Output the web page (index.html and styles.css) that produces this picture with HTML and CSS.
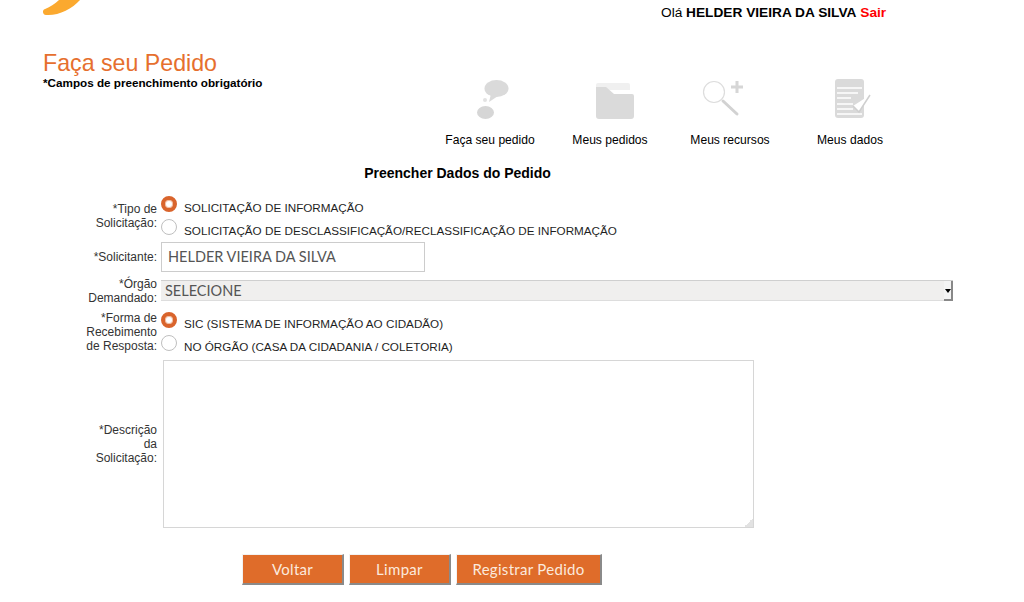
FILE: index.html
```html
<!DOCTYPE html>
<html lang="pt-BR">
<head>
    <meta charset="UTF-8">
    <title>Faça seu Pedido</title>
    <link rel="stylesheet" href="styles.css">
</head>
<body>
    <header class="top-bar">
        <svg class="logo" viewBox="0 0 60 16">
            <path fill="#FBA92F" d="M16 0C12 4 7 7 1 9.500C-1 11 0 15 3 15C15 16 29 9 37 0Z"/>
        </svg>
        <p class="user-info">Olá <b>HELDER VIEIRA DA SILVA</b> <a class="logout" href="#">Sair</a></p>
    </header>

    <div class="page-head">
        <div class="page-title">
            <h1>Faça seu Pedido</h1>
            <p>*Campos de preenchimento obrigatório</p>
        </div>
        <nav class="main-nav">
            <a class="nav-item" href="#">
                <svg class="nav-icon" viewBox="0 0 50 46">
                    <ellipse cx="31.500" cy="10.500" rx="12" ry="8.500" fill="#DADADA"/>
                    <path fill="#DADADA" d="M26 16l-2 8 9-6z"/>
                    <circle cx="20" cy="22" r="2" fill="#E2E2E2"/>
                    <ellipse cx="20.500" cy="34.500" rx="8.500" ry="6.500" fill="#D6D6D6"/>
                </svg>
                Faça seu pedido
            </a>
            <a class="nav-item" href="#">
                <svg class="nav-icon" viewBox="0 0 50 46">
                    <path fill="#F0F0F0" d="M13 5h30a2 2 0 0 1 2 2v5H11V7a2 2 0 0 1 2-2z"/>
                    <path fill="#DADADA" d="M11 9h10l8 7h18a2 2 0 0 1 2 2v20a3 3 0 0 1-3 3H14a3 3 0 0 1-3-3z"/>
                </svg>
                Meus pedidos
            </a>
            <a class="nav-item" href="#">
                <svg class="nav-icon" viewBox="0 0 50 46">
                    <circle cx="9" cy="14" r="10.500" fill="none" stroke="#DDD" stroke-width="1.200"/>
                    <path stroke="#D2D2D2" stroke-width="3" stroke-linecap="round" d="M18 23l14 13"/>
                    <path stroke="#D6D6D6" stroke-width="3" d="M32 3v12M26 9h12" fill="none"/>
                </svg>
                Meus recursos
            </a>
            <a class="nav-item" href="#">
                <svg class="nav-icon" viewBox="0 0 50 46">
                    <rect x="10" y="1" width="29" height="39" rx="3" fill="#DADADA"/>
                    <path stroke="#FFF" stroke-width="1.500" d="M12 10h25M12 15h21M12 20h14M12 26h16M12 31h16M12 36h25" fill="none"/>
                    <path stroke="#CFCFCF" stroke-width="1.500" fill="#FFF" d="M28 28l6 6 11-17"/>
                </svg>
                Meus dados
            </a>
        </nav>
    </div>

    <h2 class="form-title">Preencher Dados do Pedido</h2>

    <form class="order-form">
        <div class="form-row row-type">
            <label class="field-label">*Tipo de Solicitação:</label>
            <div class="radio-group">
                <label class="radio-option"><span class="radio checked"></span>SOLICITAÇÃO DE INFORMAÇÃO</label>
                <label class="radio-option"><span class="radio"></span>SOLICITAÇÃO DE DESCLASSIFICAÇÃO/RECLASSIFICAÇÃO DE INFORMAÇÃO</label>
            </div>
        </div>
        <div class="form-row row-name">
            <label class="field-label">*Solicitante:</label>
            <div class="text-input">HELDER VIEIRA DA SILVA</div>
        </div>
        <div class="form-row row-agency">
            <label class="field-label">*Órgão Demandado:</label>
            <div class="select-box">
                <span>SELECIONE</span>
                <span class="select-arrow"></span>
            </div>
        </div>
        <div class="form-row row-reply">
            <label class="field-label">*Forma de Recebimento de Resposta:</label>
            <div class="radio-group">
                <label class="radio-option"><span class="radio checked"></span>SIC (SISTEMA DE INFORMAÇÃO AO CIDADÃO)</label>
                <label class="radio-option"><span class="radio"></span>NO ÓRGÃO (CASA DA CIDADANIA / COLETORIA)</label>
            </div>
        </div>
        <div class="form-row row-description">
            <label class="field-label">*Descrição da Solicitação:</label>
            <textarea class="text-box"></textarea>
        </div>
        <div class="form-actions">
            <button class="action-button" type="button">Voltar</button>
            <button class="action-button" type="button">Limpar</button>
            <button class="action-button wide" type="button">Registrar Pedido</button>
        </div>
    </form>
</body>
</html>
```

FILE: styles.css
```css
* {
    margin: 0;
    padding: 0;
    box-sizing: border-box;
}

html,
body {
    height: 602px;
    overflow: hidden;
}

body {
    font-family: 'Liberation Sans', Arial, sans-serif;
    background: #FFFFFF;
    color: #000000;
}

.top-bar {
    display: flex;
    height: 20px;
    padding-left: 43px;
}

.logo {
    width: 60px;
    height: 16px;
    flex-shrink: 0;
}

.user-info {
    margin-left: 558px;
    padding-top: 5px;
    font-size: 13.700px;
    line-height: 16px;
    white-space: nowrap;
}

.logout {
    color: #FF0000;
    font-weight: bold;
    text-decoration: none;
}

.page-head {
    display: flex;
    height: 130px;
    padding: 30px 0 0 43px;
}

.page-title {
    width: 387px;
}

.page-title h1 {
    font-size: 23.200px;
    font-weight: normal;
    line-height: 27px;
    color: #E66F2E;
}

.page-title p {
    font-size: 11.700px;
    font-weight: bold;
    line-height: 12px;
}

.main-nav {
    display: flex;
    padding-top: 28px;
}

.nav-item {
    display: flex;
    flex-direction: column;
    align-items: center;
    width: 120px;
    font-size: 12.100px;
    line-height: 14px;
    color: #000000;
    text-decoration: none;
    white-space: nowrap;
}

.nav-icon {
    width: 50px;
    height: 46px;
    margin-bottom: 9px;
    overflow: visible;
}

.form-title {
    width: 915px;
    height: 45px;
    padding-top: 15px;
    font-size: 14px;
    font-weight: bold;
    line-height: 16px;
    text-align: center;
}

.order-form {
    display: flex;
    flex-direction: column;
}

.form-row {
    display: flex;
    align-items: center;
}

.field-label {
    width: 157px;
    padding-left: 84px;
    font-size: 12px;
    line-height: 14px;
    text-align: right;
    color: #333333;
    flex-shrink: 0;
}

.row-type {
    height: 45px;
    margin-top: -2px;
}

.row-name {
    height: 30px;
    margin-top: 4px;
}

.row-agency {
    height: 21px;
    margin-top: 8px;
}

.row-reply {
    height: 41px;
    margin-top: 10px;
}

.row-description {
    height: 168px;
    margin-top: 8px;
}

.radio-group {
    display: flex;
    flex-direction: column;
    gap: 7px;
    padding-left: 4px;
}

.radio-option {
    display: flex;
    align-items: flex-start;
    height: 16px;
    font-size: 11.700px;
    line-height: 24px;
    color: #1F1F1F;
    white-space: nowrap;
}

.radio {
    width: 16px;
    height: 16px;
    margin-right: 7px;
    border: 1px solid #BFBFBF;
    border-radius: 50%;
    background: #FFFFFF;
    flex-shrink: 0;
}

.radio.checked {
    border: 4px solid #D9642C;
    background: #FFFFFF;
    box-shadow: inset 0 0 0 1px #F3C2A8;
}

.text-input {
    width: 264px;
    height: 30px;
    margin-left: 4px;
    padding-left: 6px;
    border: 1px solid #CCCCCC;
    font-family: Lato, 'Open Sans', sans-serif;
    font-size: 14.500px;
    line-height: 28px;
    color: #555555;
}

.select-box {
    display: flex;
    justify-content: space-between;
    align-items: center;
    width: 792px;
    height: 21px;
    margin-left: 4px;
    padding-left: 4px;
    border-top: 1px solid #CFCFCF;
    border-bottom: 1px solid #DDDDDD;
    background: #F0EFEE;
    font-family: Lato, 'Open Sans', sans-serif;
    font-size: 14.500px;
    color: #555555;
}

.select-arrow {
    position: relative;
    width: 9px;
    height: 20px;
    border-right: 2px solid #888888;
    border-bottom: 2px solid #888888;
    background: #F4F4F4;
}

.select-arrow::after {
    content: '';
    position: absolute;
    top: 8px;
    left: 1px;
    border: 3px solid transparent;
    border-top: 4px solid #000000;
    border-bottom: 0;
}

.text-box {
    display: block;
    width: 591px;
    height: 168px;
    margin-left: 6px;
    border: 1px solid #D6D6D6;
    background: linear-gradient(135deg, transparent 50%, #E2E2E2 50%) no-repeat bottom right / 9px 9px #FFFFFF;
    resize: none;
}

.form-actions {
    display: flex;
    gap: 5px;
    margin-top: 26px;
    padding-left: 242px;
}

.action-button {
    width: 102px;
    height: 31px;
    border: 1px solid;
    border-color: #F2F2F2 #8A8A8A #8A8A8A #F2F2F2;
    border-width: 1px 2px 2px 1px;
    background: #DF6C2A;
    color: #FBE9DD;
    font-family: Lato, 'Open Sans', sans-serif;
    font-size: 15px;
    letter-spacing: 0.3px;
}

.action-button.wide {
    width: 146px;
}
```
